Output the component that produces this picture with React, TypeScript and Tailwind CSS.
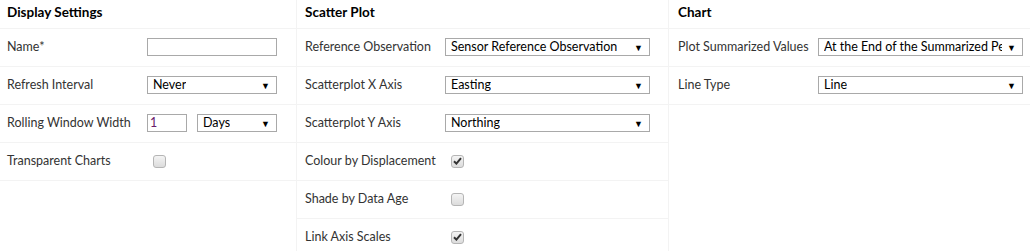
const font = { fontFamily: 'Lato, "Open Sans", sans-serif' }

function Select({ value, className }: { value: string; className: string }) {
  return (
    <div className={`flex h-[18px] items-center justify-between border border-[#a9a9a9] bg-white pl-[5px] pr-[6px] text-[12.5px] text-black ${className}`}>
      <span className="overflow-hidden whitespace-nowrap text-clip">{value}</span>
      <span className="ml-[5px] shrink-0 text-[9px] leading-none">▼</span>
    </div>
  )
}

function Check({ checked }: { checked?: boolean }) {
  return (
    <div className="ml-[6px] flex h-[13px] w-[13px] items-center justify-center rounded-[3px] border border-[#b5b5b5] bg-gradient-to-b from-[#f4f4f4] to-[#dcdcdc]">
      {checked && (
        <svg width="9" height="8" viewBox="0 0 9 8">
          <path d="M1 4.2 L3.4 6.6 L8 1.2" fill="none" stroke="#333" strokeWidth="2" />
        </svg>
      )}
    </div>
  )
}

function Row({ label, pad, children }: { label: string; pad: string; children: React.ReactNode }) {
  return (
    <div className={`flex h-[38px] items-center pb-[1px] border-b border-[#f3f3f3] ${pad}`}>
      <div className="w-[140px] shrink-0 pt-[1px] text-[12.5px] text-[#333]">{label}</div>
      {children}
    </div>
  )
}

function Header({ title, pad }: { title: string; pad: string }) {
  return (
    <div className={`flex h-[29px] items-center border-b border-[#f3f3f3] pb-[4px] text-[13.5px] font-bold text-black ${pad}`}>
      {title}
    </div>
  )
}

export default function App() {
  return (
    <div className="flex h-[251px] w-[1030px] bg-white" style={font}>
      {/* Display Settings */}
      <div className="w-[297px] border-r border-[#f3f3f3]">
        <Header title="Display Settings" pad="pl-[7px]" />
        <Row label="Name*" pad="pl-[7px]">
          <div className="h-[18px] w-[130px] border border-[#a9a9a9] bg-white" />
        </Row>
        <Row label="Refresh Interval" pad="pl-[7px]">
          <Select value="Never" className="w-[130px]" />
        </Row>
        <Row label="Rolling Window Width" pad="pl-[7px]">
          <div className="flex items-center gap-[10px]">
            <div className="flex h-[18px] w-[40px] items-center border border-[#a9a9a9] pl-[2px] text-[12.5px] text-[#6a1b6a]">1</div>
            <Select value="Days" className="w-[80px]" />
          </div>
        </Row>
        <Row label="Transparent Charts" pad="pl-[7px]">
          <Check />
        </Row>
      </div>

      {/* Scatter Plot */}
      <div className="w-[372px] border-r border-[#f3f3f3]">
        <Header title="Scatter Plot" pad="pl-[8px]" />
        <Row label="Reference Observation" pad="pl-[8px]">
          <Select value="Sensor Reference Observation" className="w-[205px]" />
        </Row>
        <Row label="Scatterplot X Axis" pad="pl-[8px]">
          <Select value="Easting" className="w-[205px]" />
        </Row>
        <Row label="Scatterplot Y Axis" pad="pl-[8px]">
          <Select value="Northing" className="w-[205px]" />
        </Row>
        <Row label="Colour by Displacement" pad="pl-[8px]">
          <Check checked />
        </Row>
        <Row label="Shade by Data Age" pad="pl-[8px]">
          <Check />
        </Row>
        <Row label="Link Axis Scales" pad="pl-[8px]">
          <Check checked />
        </Row>
      </div>

      {/* Chart */}
      <div className="flex-1">
        <Header title="Chart" pad="pl-[9px]" />
        <Row label="Plot Summarized Values" pad="pl-[9px]">
          <Select value="At the End of the Summarized Period" className="w-[205px]" />
        </Row>
        <Row label="Line Type" pad="pl-[9px]">
          <Select value="Line" className="w-[205px]" />
        </Row>
      </div>
    </div>
  )
}
